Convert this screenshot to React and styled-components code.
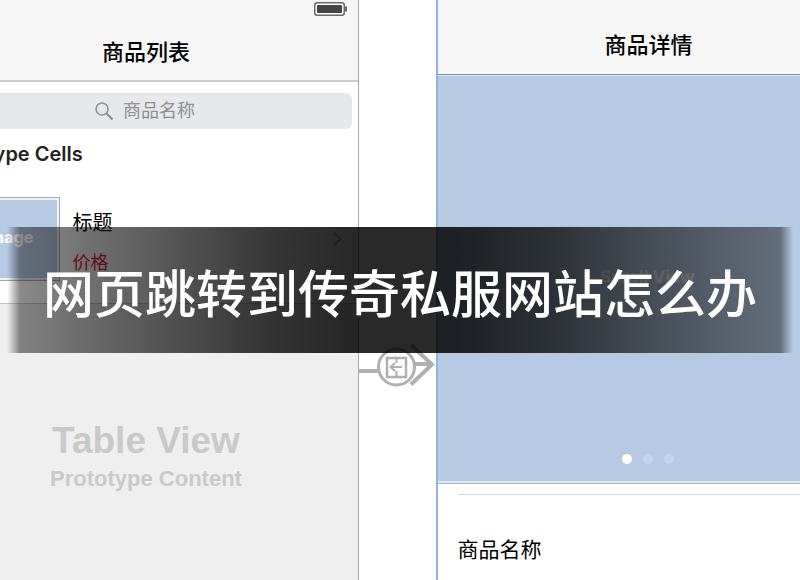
import React, { useState } from 'react';
import styled, { createGlobalStyle } from 'styled-components';

const slides = ['1', '2', '3'];

const BatteryIcon = () => (
  <svg width="34" height="14" viewBox="0 0 34 14" aria-hidden="true">
    <rect x="0.75" y="0.75" width="29.5" height="12.5" rx="2.5" fill="#fff" stroke="#6a6a6a" strokeWidth="1.5" />
    <rect x="3" y="3" width="25" height="8" rx="1" fill="#454545" />
    <path d="M31 4.500h2v5h-2z" fill="#6a6a6a" />
  </svg>
);

const SearchIcon = () => (
  <svg width="18" height="18" viewBox="0 0 18 18" fill="none" stroke="#8e8e93" strokeWidth="1.5" aria-hidden="true">
    <circle cx="7" cy="7" r="6" />
    <path d="M11.5 11.5l6 6" strokeWidth="2" />
  </svg>
);

const ChevronIcon = () => (
  <svg width="10" height="16" viewBox="0 0 10 16" fill="none" stroke="#b0b0b4" strokeWidth="2" aria-hidden="true">
    <path d="M1.5 1.5L8.5 8l-7 6.5" />
  </svg>
);

const SegueArrow = () => (
  <svg width="77" height="46" viewBox="0 0 77 46" fill="none" stroke="#b0b0b0" strokeWidth="4" aria-hidden="true">
    <path d="M0 29h20" />
    <path d="M56 22h17" />
    <path d="M52 3l21 19.500l-21 20" />
    <circle cx="37.500" cy="25" r="18" fill="#fff" strokeWidth="3" />
    <path d="M37.500 16h-9.500v19h19v-19h-9.500" strokeWidth="2.500" />
    <path d="M37.500 15v6M37.500 29v6M43 25h-11M36 21l-4.500 4l4.500 4" strokeWidth="2" />
  </svg>
);

const App = () => {
  const [keyword, setKeyword] = useState('');
  const [slide, setSlide] = useState(0);

  return (
    <>
      <GlobalStyle />
      <Canvas>
        <ListScreen>
          <ListHeader>
            <Battery>
              <BatteryIcon />
            </Battery>
            <ScreenTitle>商品列表</ScreenTitle>
          </ListHeader>

          <SearchBox>
            <SearchIcon />
            <SearchInput
              type="text"
              aria-label="商品名称"
              placeholder="商品名称"
              value={keyword}
              onChange={(e) => setKeyword(e.target.value)}
            />
          </SearchBox>

          <SectionLabel>Prototype Cells</SectionLabel>

          <Cell>
            <Thumbnail>Image</Thumbnail>
            <CellText>
              <CellTitle>标题</CellTitle>
              <CellPrice>价格</CellPrice>
            </CellText>
            <ChevronIcon />
          </Cell>

          <TablePlaceholder>
            <PlaceholderTitle>Table View</PlaceholderTitle>
            <PlaceholderText>Prototype Content</PlaceholderText>
          </TablePlaceholder>
        </ListScreen>

        <Connector>
          <SegueArrow />
        </Connector>

        <DetailScreen>
          <DetailHeader>
            <ScreenTitle>商品详情</ScreenTitle>
          </DetailHeader>

          <ScrollView>
            <ScrollLabel>Scroll View</ScrollLabel>
            <Dots>
              {slides.map((name, idx) => (
                <Dot
                  key={name}
                  type="button"
                  aria-label={name}
                  $active={slide === idx}
                  onClick={() => setSlide(idx)}
                />
              ))}
            </Dots>
          </ScrollView>

          <ProductInfo>
            <ProductName>商品名称</ProductName>
          </ProductInfo>
        </DetailScreen>

        <Banner>
          <BannerTitle>网页跳转到传奇私服网站怎么办</BannerTitle>
        </Banner>
      </Canvas>
    </>
  );
};

export default App;

const GlobalStyle = createGlobalStyle`
  * {
    box-sizing: border-box;
  }

  body {
    margin: 0;
    background: #fff;
    font-family: Inter, 'Noto Sans CJK SC', sans-serif;
  }

  h1, h2, p {
    margin: 0;
  }
`;

const Canvas = styled.main`
  position: relative;
  display: flex;
  justify-content: center;
  min-height: 100vh;
  padding-right: 6px;
  overflow: hidden;
`;

const Screen = styled.section`
  display: flex;
  flex-direction: column;
  flex: 0 0 424px;
`;

const ListScreen = styled(Screen)`
  border-right: 1px solid #a8a8a8;
`;

const DetailScreen = styled(Screen)`
  border-left: 2px solid #8fb3dc;
`;

const Header = styled.header`
  display: flex;
  flex-direction: column;
  align-items: center;
  background: #f6f6f6;
`;

const ListHeader = styled(Header)`
  height: 82px;
  padding-top: 2px;
  border-bottom: 2px solid #cbcbcb;
`;

const DetailHeader = styled(Header)`
  height: 75px;
  padding-top: 29px;
  border-bottom: 1px solid #8192a8;
`;

const Battery = styled.div`
  display: flex;
  align-self: flex-end;
  height: 34px;
  padding-right: 10px;
`;

const ScreenTitle = styled.h2`
  font-size: 22px;
  line-height: 32px;
  font-weight: 500;
  color: #000;
`;

const SearchBox = styled.label`
  display: flex;
  align-items: center;
  justify-content: center;
  gap: 10px;
  height: 36px;
  margin: 11px 6px 0;
  border-radius: 6px;
  background: #e6e8eb;
`;

const SearchInput = styled.input`
  width: 74px;
  padding: 0;
  border: none;
  outline: none;
  background: transparent;
  font-family: inherit;
  font-size: 18px;
  line-height: 28px;

  &::placeholder {
    color: #8e8e93;
  }
`;

const SectionLabel = styled.p`
  padding: 9px 0 0;
  font-size: 20px;
  line-height: 32px;
  font-weight: 600;
  color: #222;
`;

const Cell = styled.div`
  display: flex;
  align-items: center;
  height: 134px;
  padding: 20px 16px 16px 24px;
  border-bottom: 1px solid #c4c4c4;
`;

const Thumbnail = styled.div`
  display: flex;
  align-items: center;
  justify-content: center;
  width: 101px;
  height: 84px;
  padding-bottom: 4px;
  border: 1px solid #a9a9a9;
  box-shadow: inset 0 0 0 2px #eef1f5;
  background: #b6cae4;
  font-size: 16px;
  font-weight: 800;
  color: #fff;
`;

const CellText = styled.div`
  display: flex;
  flex-direction: column;
  flex: 1;
  gap: 12px;
  padding: 8px 0 0 13px;
`;

const CellTitle = styled.p`
  font-size: 20px;
  line-height: 28px;
  color: #000;
`;

const CellPrice = styled.p`
  font-size: 18px;
  line-height: 28px;
  color: #e0242c;
`;

const TablePlaceholder = styled.div`
  display: flex;
  flex-direction: column;
  align-items: center;
  flex: 1;
  padding-top: 115px;
  background: #efefef;
  font-family: 'Liberation Sans', Arial, sans-serif;
  font-weight: 700;
  color: #c9c9c9;
`;

const PlaceholderTitle = styled.p`
  font-size: 37px;
  line-height: 44px;
`;

const PlaceholderText = styled.p`
  font-size: 22px;
  line-height: 32px;
`;

const Connector = styled.div`
  flex: 0 0 77px;
  padding-top: 342px;
`;

const ScrollView = styled.div`
  display: flex;
  flex-direction: column;
  align-items: center;
  justify-content: space-between;
  height: 409px;
  padding: 185px 2px 19px 0;
  border-top: 1px solid #dde6f1;
  border-bottom: 1px solid #9fb4c9;
  box-shadow: inset 0 -2px 0 #dfe7ee;
  background: #b6cae4;
`;

const ScrollLabel = styled.p`
  font-size: 17px;
  line-height: 32px;
  font-weight: 800;
  color: #e8eef6;
`;

const Dots = styled.div`
  display: flex;
  gap: 11px;
`;

const Dot = styled.button`
  width: 10px;
  height: 10px;
  padding: 0;
  border: none;
  border-radius: 50%;
  background: ${({ $active }) => ($active ? '#fff' : '#c5d5ef')};
  cursor: pointer;
`;

const ProductInfo = styled.div`
  margin: 10px 0 0 20px;
  padding-top: 39px;
  border-top: 1px solid #ccdae4;
`;

const ProductName = styled.p`
  font-size: 21px;
  line-height: 32px;
  color: #000;
`;

/* dark strip that lies over both screens and fades out at its ends */
const Banner = styled.div`
  position: absolute;
  top: 227px;
  left: 0;
  right: 0;
  display: flex;
  justify-content: center;
  height: 126px;
  padding-top: 28px;
  background: linear-gradient(
    90deg,
    transparent 7px,
    rgba(0, 0, 0, 0.46) 20px,
    rgba(0, 0, 0, 0.58) 13%,
    rgba(0, 0, 0, 0.71) 26%,
    rgba(0, 0, 0, 0.79) 34%,
    rgba(0, 0, 0, 0.84) 43%,
    rgba(0, 0, 0, 0.84) 57%,
    rgba(0, 0, 0, 0.76) 69%,
    rgba(0, 0, 0, 0.61) 82%,
    rgba(0, 0, 0, 0.46) calc(100% - 20px),
    transparent calc(100% - 7px)
  );
`;

const BannerTitle = styled.h1`
  font-family: 'Noto Sans CJK SC', sans-serif;
  font-size: 51px;
  line-height: 72px;
  font-weight: 500;
  white-space: nowrap;
  color: #fff;
`;
